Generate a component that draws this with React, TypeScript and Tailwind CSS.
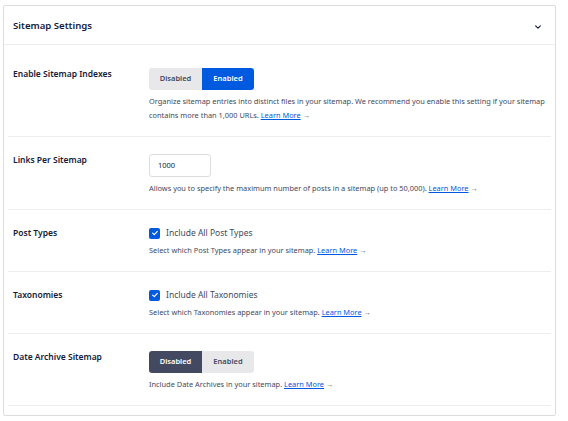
import React from "react";

const font = { fontFamily: '"Noto Sans", "Open Sans", Arial, sans-serif' };

function Segmented({ value }: { value: "disabled" | "enabled" }) {
  const on = value === "enabled";
  return (
    <div className="flex h-[22px] w-[105px] overflow-hidden rounded-[3px] text-[7.5px] font-semibold">
      <div
        className={
          on
            ? "flex w-[53px] items-center justify-center bg-[#e8e8eb] text-[#434960]"
            : "flex w-[53px] items-center justify-center bg-[#434960] text-white"
        }
      >
        Disabled
      </div>
      <div
        className={
          on
            ? "flex flex-1 items-center justify-center bg-[#005ae0] text-white"
            : "flex flex-1 items-center justify-center bg-[#e8e8eb] text-[#434960]"
        }
      >
        Enabled
      </div>
    </div>
  );
}

function LearnMore() {
  return (
    <>
      {" "}
      <a className="text-[#005ae0]">
        <span className="underline">Learn More</span> <span className="text-[#434960]">→</span>
      </a>
    </>
  );
}

function Check({ label }: { label: string }) {
  return (
    <div className="flex h-[12px] items-center gap-[6px]">
      <div className="flex h-[11px] w-[11px] items-center justify-center rounded-[2px] bg-[#005ae0]">
        <svg viewBox="0 0 12 12" className="h-[8px] w-[8px]">
          <path d="M2.5 6.2 L5 8.5 L9.5 3.5" fill="none" stroke="white" strokeWidth="1.8" strokeLinecap="round" strokeLinejoin="round" />
        </svg>
      </div>
      <span className="text-[8.5px] text-[#434960]">{label}</span>
    </div>
  );
}

function Row({ label, children }: { label: string; children: React.ReactNode }) {
  return (
    <div className="flex border-b border-[#ededf0] pl-[5px] pt-[17px] pb-[14px]">
      <div className="w-[136px] shrink-0 text-[8.5px] leading-[11px] font-semibold text-[#141b38]">{label}</div>
      <div className="flex-1">{children}</div>
    </div>
  );
}

function Desc({ children }: { children: React.ReactNode }) {
  return <p className="mt-[4px] text-[7.4px] leading-[14px] text-[#434960]">{children}</p>;
}

export default function App() {
  return (
    <div className="min-h-[421px] bg-white pl-[3px] pt-[5px]" style={font}>
      <div className="w-[553px] rounded-[2px] border border-[#dcdde1] bg-white">
        <div className="flex h-[39px] items-center justify-between border-b border-[#ededf0] pl-[9px] pr-[13px] pt-[3px]">
          <h2 className="text-[9.6px] font-semibold text-[#141b38]">Sitemap Settings</h2>
          <svg viewBox="0 0 10 10" className="h-[8px] w-[8px]">
            <path d="M2 3.5 L5 6.5 L8 3.5" fill="none" stroke="#141b38" strokeWidth="1.4" strokeLinecap="round" strokeLinejoin="round" />
          </svg>
        </div>
        <div className="px-[4px] pt-[6px] pb-[9px]">
          <Row label="Enable Sitemap Indexes">
            <Segmented value="enabled" />
            <Desc>
              Organize sitemap entries into distinct files in your sitemap. We recommend you enable this setting if your sitemap contains more than 1,000 URLs.
              <LearnMore />
            </Desc>
          </Row>
          <Row label="Links Per Sitemap">
            <div className="flex h-[23px] w-[62px] items-center rounded-[3px] border border-[#dcdde1] px-[8px] text-[7.5px] text-[#141b38]">1000</div>
            <Desc>
              Allows you to specify the maximum number of posts in a sitemap (up to 50,000).
              <LearnMore />
            </Desc>
          </Row>
          <Row label="Post Types">
            <Check label="Include All Post Types" />
            <Desc>
              Select which Post Types appear in your sitemap.
              <LearnMore />
            </Desc>
          </Row>
          <Row label="Taxonomies">
            <Check label="Include All Taxonomies" />
            <Desc>
              Select which Taxonomies appear in your sitemap.
              <LearnMore />
            </Desc>
          </Row>
          <Row label="Date Archive Sitemap">
            <Segmented value="disabled" />
            <Desc>
              Include Date Archives in your sitemap.
              <LearnMore />
            </Desc>
          </Row>
        </div>
      </div>
    </div>
  );
}
